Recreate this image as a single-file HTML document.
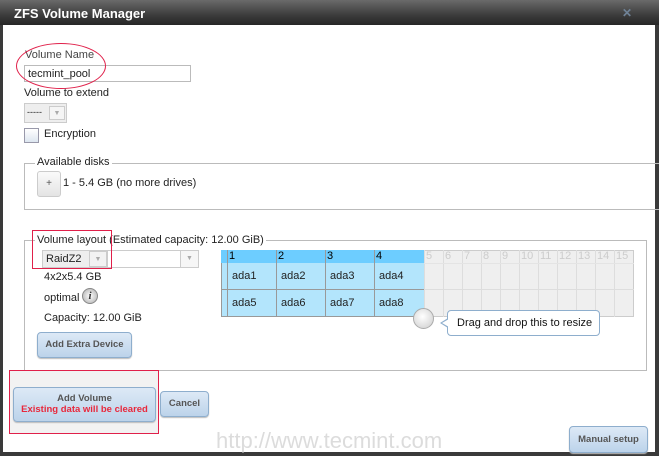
<!DOCTYPE html>
<html><head><style>
*{margin:0;padding:0;box-sizing:border-box}
body{width:659px;height:456px;overflow:hidden;background:#3a3a3a;font-family:"Liberation Sans",sans-serif;font-size:11px;color:#222;position:relative}
.a{position:absolute}
#win{left:3px;top:25px;width:652px;height:427px;background:#fff}
#title{left:0;top:0;width:659px;height:25px;background:linear-gradient(#6a6a6a,#3c3c3c 60%,#262626);color:#fff;font-weight:bold;font-size:13px;padding:6px 0 0 14px}
.btn{border:1px solid #8eaecd;border-radius:4px;background:linear-gradient(#dde9f6,#bcd3ea);color:#555;font-weight:bold;text-align:center;box-shadow:0 1px 1px #bbb}
.cell{position:absolute;border-right:1px solid #999;border-bottom:1px solid #999}
</style></head><body>
<div class="a" id="title">ZFS Volume Manager</div>
<div class="a" style="left:622px;top:6px;color:#6f8296;font-weight:bold;font-size:12px">✕</div>
<div class="a" id="win"></div>

<div class="a" style="left:25px;top:49px;color:#444">Volume Name</div>
<div class="a" style="left:24px;top:65px;width:167px;height:17px;border:1px solid #bbb;padding:2px 3px;font-size:11px">tecmint_pool</div>
<div class="a" style="left:16px;top:43px;width:90px;height:46px;border:1.5px solid #e0204a;border-radius:50%"></div>
<div class="a" style="left:24px;top:87px">Volume to extend</div>
<div class="a" style="left:24px;top:103px;width:43px;height:20px;border:1px solid #ccc;background:#eee;padding:3px 2px;font-size:9px">-----<span style="position:absolute;left:24px;top:2px;width:16px;height:14px;border:1px solid #ccc;background:#f5f5f5;color:#aaa;font-size:7px;text-align:center;line-height:14px">▼</span></div>
<div class="a" style="left:24px;top:128px;width:15px;height:15px;border:1px solid #99a;background:linear-gradient(#fff,#dde6f0)"></div>
<div class="a" style="left:44px;top:128px">Encryption</div>

<div class="a" style="left:24px;top:163px;width:640px;height:47px;border:1px solid #bbb"></div>
<div class="a" style="left:35px;top:156px;background:#fff;padding:0 2px">Available disks</div>
<div class="a" style="left:37px;top:171px;width:24px;height:26px;border:1px solid #ccc;border-radius:3px;background:linear-gradient(#fafafa,#e4e4e4);text-align:center;line-height:24px;font-size:10px;color:#555">+</div>
<div class="a" style="left:63px;top:177px">1 - 5.4 GB (no more drives)</div>

<div class="a" style="left:24px;top:240px;width:623px;height:131px;border:1px solid #bbb"></div>
<div class="a" style="left:35px;top:234px;background:#fff;padding:0 2px">Volume layout (Estimated capacity: 12.00 GiB)</div>
<div class="a" style="left:42px;top:250px;width:157px;height:18px;border:1px solid #ccc"></div>
<div class="a" style="left:42px;top:250px;width:66px;height:18px;border:1px solid #ccc;background:#eee;padding:2px 3px">RaidZ2</div>
<div class="a" style="left:89px;top:251px;width:18px;height:16px;border:1px solid #ccc;background:#f2f2f2;color:#aaa;font-size:7px;text-align:center;line-height:15px">▼</div>
<div class="a" style="left:180px;top:251px;width:18px;height:16px;border-left:1px solid #ccc;background:#f6f6f6;color:#aaa;font-size:7px;text-align:center;line-height:15px">▼</div>
<div class="a" style="left:32px;top:230px;width:80px;height:39px;border:1.5px solid #e0204a"></div>
<div class="a" style="left:44px;top:271px">4x2x5.4 GB</div>
<div class="a" style="left:44px;top:292px">optimal</div>
<div class="a" style="left:82px;top:288px;width:16px;height:16px;border-radius:50%;background:radial-gradient(#fff,#aaa);border:1px solid #888;font:italic bold 11px 'Liberation Serif',serif;text-align:center;line-height:14px;color:#333">i</div>
<div class="a" style="left:44px;top:312px">Capacity: 12.00 GiB</div>
<div class="a btn" style="left:37px;top:332px;width:95px;height:26px;line-height:24px;font-size:9.5px">Add Extra Device</div>

<div class="a" style="left:221px;top:250px;width:413px;height:67px;background:#efefef;border:1px solid #ccc"></div>
<div class="a" style="left:221px;top:250px;width:203px;height:13px;background:#6dcdff"></div>
<div class="a" style="left:221px;top:263px;width:203px;height:54px;background:#b3e5fc;border-left:1px solid #999"></div>
<div id="g"></div>
<script>
var h='';var xs=[227,276,325,374];
for(var i=0;i<4;i++){h+='<div class="a" style="left:'+xs[i]+'px;top:250px;width:49px;height:67px;border-left:1px solid #999"></div>';
h+='<div class="a" style="left:'+(xs[i]+2)+'px;top:250px;font-size:11px;color:#000;line-height:13px">'+(i+1)+'</div>';
h+='<div class="a" style="left:'+(xs[i]+5)+'px;top:270px">ada'+(i+1)+'</div><div class="a" style="left:'+(xs[i]+5)+'px;top:297px">ada'+(i+5)+'</div>';}
h+='<div class="a" style="left:221px;top:289px;width:203px;border-top:1px solid #999"></div><div class="a" style="left:221px;top:316px;width:203px;border-top:1px solid #999"></div>';
h+='<div class="a" style="left:424px;top:289px;width:210px;border-top:1px solid #ddd"></div>';
for(var j=5;j<=15;j++){var x=424+(j-5)*19;h+='<div class="a" style="left:'+x+'px;top:250px;width:19px;height:67px;border-left:1px solid #ddd;color:#ccc;font-size:11px;line-height:13px;padding-left:1px">'+j+'</div>';}
h+='<div class="a" style="left:424px;top:263px;width:210px;border-top:1px solid #e4e4e4"></div>';
document.getElementById('g').innerHTML=h;
</script>
<div class="a" style="left:413px;top:308px;width:21px;height:21px;border-radius:50%;background:radial-gradient(circle at 45% 40%,#fff,#ccc);border:1px solid #aaa"></div>
<div class="a" style="left:447px;top:310px;width:153px;height:26px;border:1px solid #8eaecd;border-radius:4px;background:#fff;padding:6px 0 0 9px;font-size:11px;color:#111">Drag and drop this to resize</div>
<div class="a" style="left:440px;top:318px;width:0;height:0;border-top:5px solid transparent;border-bottom:5px solid transparent;border-right:8px solid #8eaecd"></div>
<div class="a" style="left:442px;top:319px;width:0;height:0;border-top:4px solid transparent;border-bottom:4px solid transparent;border-right:7px solid #fff"></div>

<div class="a" style="left:9px;top:370px;width:150px;height:64px;background:#f2f2f2;border:1.5px solid #e0204a"></div>
<div class="a btn" style="left:13px;top:387px;width:143px;height:35px;font-size:9.5px;padding-top:5px;line-height:11px">Add Volume<br><span style="color:#e8283c">Existing data will be cleared</span></div>
<div class="a btn" style="left:160px;top:391px;width:49px;height:26px;line-height:24px;font-size:9.5px">Cancel</div>
<div class="a" style="left:216px;top:428px;font-size:22px;color:#dcdcdc">http://www.tecmint.com</div>
<div class="a btn" style="left:569px;top:426px;width:79px;height:27px;line-height:25px;font-size:9.5px">Manual setup</div>
</body></html>
